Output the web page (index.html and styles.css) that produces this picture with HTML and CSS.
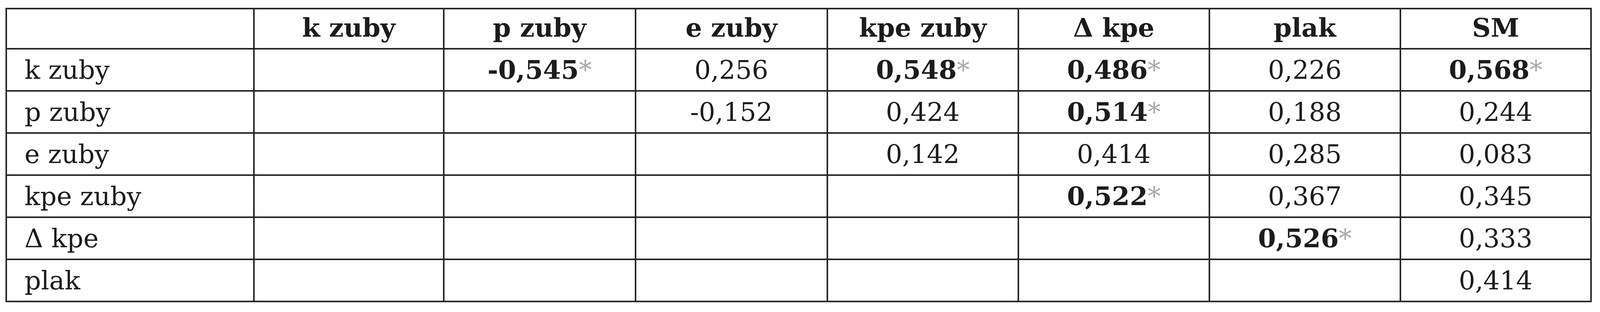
FILE: index.html
```html
<!DOCTYPE html>
<html lang="cs">
<head>
<meta charset="utf-8">
<title>Korelace</title>
<link rel="stylesheet" href="styles.css">
</head>
<body>
<div class="grid" role="table">
  <div class="cell head first"></div>
  <div class="cell head">k zuby</div>
  <div class="cell head">p zuby</div>
  <div class="cell head">e zuby</div>
  <div class="cell head">kpe zuby</div>
  <div class="cell head">Δ kpe</div>
  <div class="cell head">plak</div>
  <div class="cell head">SM</div>

  <div class="cell first">k zuby</div>
  <div class="cell"></div>
  <div class="cell"><b>-0,545</b><span class="ast">*</span></div>
  <div class="cell">0,256</div>
  <div class="cell"><b>0,548</b><span class="ast">*</span></div>
  <div class="cell"><b>0,486</b><span class="ast">*</span></div>
  <div class="cell">0,226</div>
  <div class="cell"><b>0,568</b><span class="ast">*</span></div>

  <div class="cell first">p zuby</div>
  <div class="cell"></div>
  <div class="cell"></div>
  <div class="cell">-0,152</div>
  <div class="cell">0,424</div>
  <div class="cell"><b>0,514</b><span class="ast">*</span></div>
  <div class="cell">0,188</div>
  <div class="cell">0,244</div>

  <div class="cell first">e zuby</div>
  <div class="cell"></div>
  <div class="cell"></div>
  <div class="cell"></div>
  <div class="cell">0,142</div>
  <div class="cell">0,414</div>
  <div class="cell">0,285</div>
  <div class="cell">0,083</div>

  <div class="cell first">kpe zuby</div>
  <div class="cell"></div>
  <div class="cell"></div>
  <div class="cell"></div>
  <div class="cell"></div>
  <div class="cell"><b>0,522</b><span class="ast">*</span></div>
  <div class="cell">0,367</div>
  <div class="cell">0,345</div>

  <div class="cell first">Δ kpe</div>
  <div class="cell"></div>
  <div class="cell"></div>
  <div class="cell"></div>
  <div class="cell"></div>
  <div class="cell"></div>
  <div class="cell"><b>0,526</b><span class="ast">*</span></div>
  <div class="cell">0,333</div>

  <div class="cell first">plak</div>
  <div class="cell"></div>
  <div class="cell"></div>
  <div class="cell"></div>
  <div class="cell"></div>
  <div class="cell"></div>
  <div class="cell"></div>
  <div class="cell">0,414</div>
</div>
</body>
</html>
```
FILE: styles.css
```css
html, body {
  margin: 0;
  padding: 0;
  background: #ffffff;
}

body {
  font-family: "DejaVu Serif", "Liberation Serif", serif;
  font-size: 66px;
  color: #1c1c1c;
}

/* Column widths are expressed relative to the viewport so the whole
   table keeps the reference proportions (658/505/510/510/508/508/508/507
   out of a 4255px wide page). */
.grid {
  display: grid;
  grid-template-columns: 15.464vw 11.868vw 11.986vw 11.986vw 11.939vw 11.939vw 11.939vw 11.915vw;
  grid-template-rows: 103px repeat(6, 108px);
  width: max-content;
  margin: 20px 0 0 0.3525vw;
  border-top: 4px solid #262626;
  border-left: 4px solid #262626;
}

.cell {
  box-sizing: border-box;
  border-right: 4px solid #262626;
  border-bottom: 4px solid #262626;
  display: flex;
  align-items: center;
  justify-content: center;
  white-space: nowrap;
}

.head {
  font-weight: bold;
  padding-bottom: 6px;
}

.first {
  justify-content: flex-start;
  padding-left: 1.08vw;
}

.head.first {
  padding-left: 0;
}

.ast {
  color: #a9a9a9;
}
```
